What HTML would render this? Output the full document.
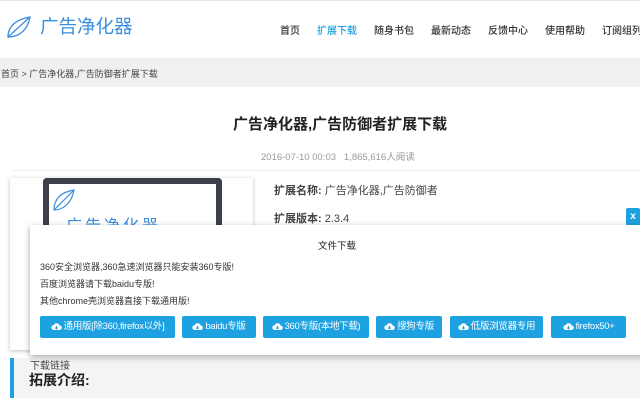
<!DOCTYPE html>
<html><head><meta charset="utf-8"><style>
*{margin:0;padding:0;box-sizing:border-box}
body{width:640px;height:400px;overflow:hidden;background:#fff;font-family:"Liberation Sans","Noto Sans CJK SC",sans-serif;position:relative;color:#333}
.abs{position:absolute;white-space:nowrap}
.nav{font-size:10px;color:#333;top:22px;font-weight:500}
.btn{position:absolute;top:316px;height:22px;background:#1da1e0;color:#fff;font-size:9.5px;line-height:22px;text-align:center;border-radius:2px;white-space:nowrap;letter-spacing:-0.3px}
.btn svg{vertical-align:-2px;margin-right:2px}
</style></head><body>
<div class="abs" style="left:0;top:0;width:640px;height:1px;background:#e6e6e6"></div>
<svg class="abs" style="left:6px;top:15px" width="26" height="24" viewBox="0 0 26 24"><path d="M2 22 C2 10 12 4 24 2 C22 14 14 22 2 22 Z M2 22 L24 2" fill="none" stroke="#3a8ee0" stroke-width="1.3"/></svg>
<div class="abs" style="left:40px;top:13px;font-size:18.5px;color:#3a8ee0">广告净化器</div>
<div class="abs nav" style="left:280px">首页</div>
<div class="abs nav" style="left:317px;color:#1da1e0">扩展下载</div>
<div class="abs nav" style="left:374px">随身书包</div>
<div class="abs nav" style="left:431px">最新动态</div>
<div class="abs nav" style="left:488px">反馈中心</div>
<div class="abs nav" style="left:545px">使用帮助</div>
<div class="abs nav" style="left:602px">订阅组列</div>
<div class="abs" style="left:0;top:58px;width:640px;height:29px;background:#f0f0f0"></div>
<div class="abs" style="left:1px;top:67px;font-size:9px;color:#444">首页 &gt; 广告净化器,广告防御者扩展下载</div>
<div class="abs" style="left:233px;top:113px;font-size:15px;font-weight:bold;color:#222">广告净化器,广告防御者扩展下载</div>
<div class="abs" style="left:261px;top:149px;font-size:9.5px;color:#999">2016-07-10 00:03 &nbsp;&nbsp;1,865,616人阅读</div>
<div class="abs" style="left:12px;top:170px;width:628px;height:1px;background:#eee"></div>
<div class="abs" style="left:10px;top:178px;width:243px;height:172px;background:#fff;box-shadow:0 1px 4px rgba(0,0,0,.25)"></div>
<div class="abs" style="left:43px;top:178px;width:179px;height:60px;background:#fff;border:6px solid #3b404b;border-bottom:none;border-radius:4px 4px 0 0"></div>
<svg class="abs" style="left:52px;top:188px" width="24" height="24" viewBox="0 0 24 24"><path d="M2 22 C2 10 10 4 22 2 C20 14 12 22 2 22 Z M2 22 L22 2" fill="none" stroke="#3a8ee0" stroke-width="1.2"/></svg>
<div class="abs" style="left:66px;top:212px;font-size:16px;color:#3a8ee0;letter-spacing:3px">广告净化器</div>
<div class="abs" style="left:274px;top:182px;font-size:11px;color:#444"><b>扩展名称:</b> 广告净化器,广告防御者</div>
<div class="abs" style="left:274px;top:210px;font-size:11px;color:#444"><b>扩展版本:</b> 2.3.4</div>
<div class="abs" style="left:626px;top:208px;width:14px;height:18px;background:#1da1e0;border-radius:2px;color:#fff;font-size:10px;font-weight:bold;text-align:center;line-height:18px">x</div>
<div class="abs" style="left:10px;top:358px;width:630px;height:40px;background:#f4f4f4;border-left:4px solid #1da1e0"></div>
<div class="abs" style="left:30px;top:357px;font-size:10px;color:#444">下载链接</div>
<div class="abs" style="left:29px;top:370px;font-size:14px;font-weight:bold;color:#222">拓展介绍:</div>
<div class="abs" style="left:30px;top:225px;width:620px;height:130px;background:#fff;box-shadow:0 2px 6px rgba(0,0,0,.35)"></div>
<div class="abs" style="left:318px;top:238px;font-size:9.5px;color:#222">文件下载</div>
<div class="abs" style="left:40px;top:260px;font-size:9px;color:#333">360安全浏览器,360急速浏览器只能安装360专版!</div>
<div class="abs" style="left:40px;top:277px;font-size:9px;color:#333">百度浏览器请下载baidu专版!</div>
<div class="abs" style="left:40px;top:294px;font-size:9px;color:#333">其他chrome壳浏览器直接下载通用版!</div>
<svg width="0" height="0" style="position:absolute"><defs><symbol id="c" viewBox="0 0 16 12"><path d="M4 11 A3.5 3.5 0 0 1 4 4 A4.5 4.5 0 0 1 12.5 4.5 A3 3 0 0 1 12.5 11 Z" fill="#fff"/><path d="M8 5 V9 M6 7.5 L8 9.5 L10 7.5" stroke="#1da1e0" stroke-width="1.4" fill="none"/></symbol></defs></svg>
<div class="btn" style="left:40px;width:135px"><svg width="11" height="9"><use href="#c"/></svg>通用版[除360,firefox以外]</div>
<div class="btn" style="left:182px;width:74px"><svg width="11" height="9"><use href="#c"/></svg>baidu专版</div>
<div class="btn" style="left:263px;width:106px"><svg width="11" height="9"><use href="#c"/></svg>360专版(本地下载)</div>
<div class="btn" style="left:376px;width:66px"><svg width="11" height="9"><use href="#c"/></svg>搜狗专版</div>
<div class="btn" style="left:450px;width:93px"><svg width="11" height="9"><use href="#c"/></svg>低版浏览器专用</div>
<div class="btn" style="left:551px;width:75px"><svg width="11" height="9"><use href="#c"/></svg>firefox50+</div>
</body></html>
